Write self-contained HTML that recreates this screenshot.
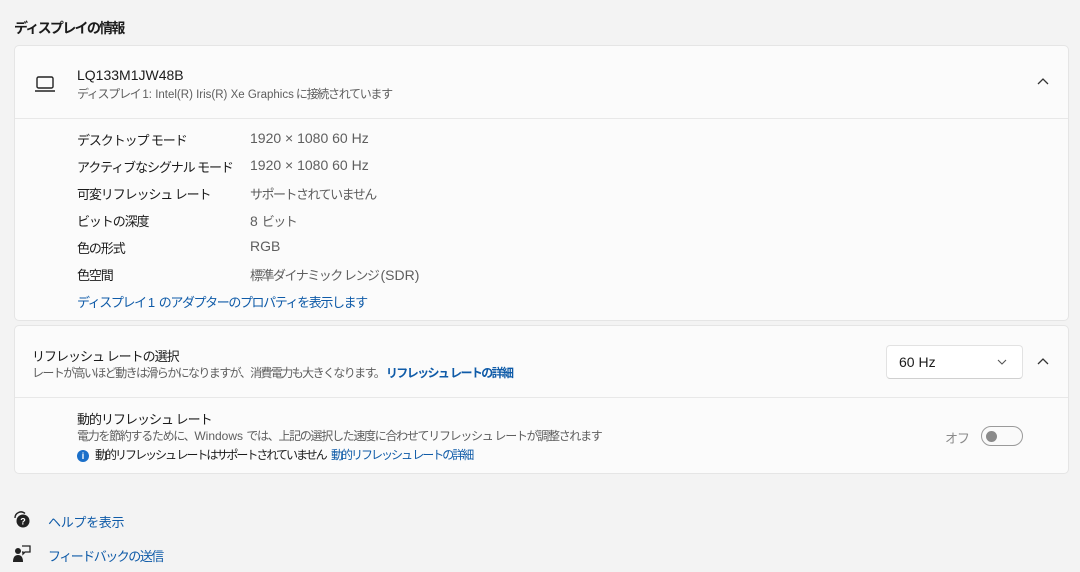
<!DOCTYPE html>
<html><head><meta charset="utf-8"><style>
*{margin:0;padding:0;box-sizing:border-box}
body{width:1080px;height:572px;background:#f3f3f3;font-family:"Liberation Sans","Noto Sans CJK JP",sans-serif;color:#1b1b1b;position:relative;overflow:hidden}
.a{position:absolute;white-space:nowrap}
.card{position:absolute;left:14px;width:1055px;background:#fbfbfb;border:1px solid #e5e5e5;border-radius:5px}
.div{position:absolute;left:0;right:0;height:1px;background:#e8e8e8}
.t14{font-size:14px}.t12{font-size:12px;color:#5e5e5e}
.lbl{font-size:13px;letter-spacing:-1.1px;color:#1b1b1b}.val{font-size:14px;color:#5e5e5e}
.vj{font-size:13px;letter-spacing:-1.5px;color:#5e5e5e}
.L{letter-spacing:0}
.link{color:#0f5ba8}
</style></head><body>
<div class="a" style="left:14px;top:18px;font-size:14px;font-weight:600;letter-spacing:-1.7px">ディスプレイの情報</div>

<div class="card" style="top:45px;height:276px">
 <svg class="a" style="left:19px;top:29px" width="22" height="18" viewBox="0 0 22 18"><rect x="3" y="2" width="16" height="11" rx="1.5" fill="none" stroke="#222" stroke-width="1.4"/><line x1="1" y1="16" x2="21" y2="16" stroke="#222" stroke-width="1.4"/></svg>
 <div class="a t14" style="left:62px;top:21px">LQ133M1JW48B</div>
 <div class="a t12" style="left:62px;top:39px;letter-spacing:-1.3px">ディスプレイ <span class="L" style="font-size:11.5px">1: Intel(R) Iris(R) Xe Graphics</span> に接続されています</div>
 <svg class="a" style="left:1022px;top:31px" width="12" height="8" viewBox="0 0 12 8"><path d="M1 7 L6 2 L11 7" fill="none" stroke="#333" stroke-width="1.3"/></svg>
 <div class="div" style="top:72px"></div>
 <div class="a lbl" style="left:62px;top:84px">デスクトップ モード</div><div class="a val" style="left:235px;top:84px">1920 × 1080 60 Hz</div>
 <div class="a lbl" style="left:62px;top:111px">アクティブなシグナル モード</div><div class="a val" style="left:235px;top:111px">1920 × 1080 60 Hz</div>
 <div class="a lbl" style="left:62px;top:138px">可変リフレッシュ レート</div><div class="a vj" style="left:235px;top:138px">サポートされていません</div>
 <div class="a lbl" style="left:62px;top:165px">ビットの深度</div><div class="a vj" style="left:235px;top:165px"><span class="L" style="font-size:14px">8 </span>ビット</div>
 <div class="a lbl" style="left:62px;top:192px">色の形式</div><div class="a val" style="left:235px;top:192px">RGB</div>
 <div class="a lbl" style="left:62px;top:219px">色空間</div><div class="a vj" style="left:235px;top:219px">標準ダイナミック レンジ <span class="L" style="font-size:14px">(SDR)</span></div>
 <div class="a link" style="left:62px;top:246px;font-size:13px;letter-spacing:-1.4px">ディスプレイ <span class="L">1 </span>のアダプターのプロパティを表示します</div>
</div>

<div class="card" style="top:325px;height:149px">
 <div class="a" style="left:17px;top:20px;font-size:13px;letter-spacing:-1px">リフレッシュ レートの選択</div>
 <div class="a t12" style="left:17px;top:38px;letter-spacing:-1.6px">レートが高いほど動きは滑らかになりますが、消費電力も大きくなります。 <b class="link" style="font-weight:600">リフレッシュ レートの詳細</b></div>
 <div class="a" style="left:871px;top:19px;width:137px;height:34px;background:#fff;border:1px solid #e2e2e2;border-bottom-color:#d0d0d0;border-radius:4px">
  <div class="a t14" style="left:12px;top:8px">60 Hz</div>
  <svg class="a" style="left:110px;top:13px" width="10" height="6" viewBox="0 0 10 6"><path d="M1 1 L5 5 L9 1" fill="none" stroke="#555" stroke-width="1.1"/></svg>
 </div>
 <svg class="a" style="left:1022px;top:31px" width="12" height="8" viewBox="0 0 12 8"><path d="M1 7 L6 2 L11 7" fill="none" stroke="#333" stroke-width="1.3"/></svg>
 <div class="div" style="top:71px"></div>
 <div class="a" style="left:62px;top:83px;font-size:13px;letter-spacing:-1px">動的リフレッシュ レート</div>
 <div class="a t12" style="left:62px;top:101px;letter-spacing:-1.3px">電力を節約するために、<span class="L">Windows </span>では、上記の選択した速度に合わせてリフレッシュ レートが調整されます</div>
 <div class="a" style="left:62px;top:124px;width:12px;height:12px;border-radius:50%;background:#1a6fc9;color:#fff;font-size:9px;font-weight:bold;text-align:center;line-height:12px">i</div>
 <div class="a" style="left:80px;top:120px;font-size:12px;color:#1b1b1b;letter-spacing:-2px">動的リフレッシュ レートはサポートされていません <span class="link" style="margin-left:4px">動的リフレッシュ レートの詳細</span></div>
 <div class="a" style="left:930px;top:102px;font-size:13px;color:#8a8a8a;letter-spacing:-1px">オフ</div>
 <div class="a" style="left:966px;top:100px;width:42px;height:20px;border:1px solid #9a9a9a;border-radius:10px;background:#fafafa"><div class="a" style="left:4px;top:4px;width:11px;height:11px;border-radius:50%;background:#8a8a8a"></div></div>
</div>

<svg class="a" style="left:13px;top:511px" width="18" height="18" viewBox="0 0 18 18"><circle cx="10" cy="10" r="6.5" fill="#222"/><path d="M2 7 A6 6 0 0 1 12 2.5" fill="none" stroke="#222" stroke-width="1.4"/><text x="10" y="13.5" font-size="9" fill="#fff" text-anchor="middle" font-family="Liberation Sans" font-weight="bold">?</text></svg>
<div class="a link" style="left:48px;top:512px;font-size:13px;letter-spacing:-0.3px">ヘルプを表示</div>
<svg class="a" style="left:13px;top:545px" width="18" height="18" viewBox="0 0 18 18"><circle cx="5" cy="6" r="3" fill="#222"/><path d="M0 17 Q0 10 5 10 Q10 10 10 17Z" fill="#222"/><path d="M9 1 H17 V7 H12 L10 9 V7 H9" fill="none" stroke="#222" stroke-width="1.3"/></svg>
<div class="a link" style="left:48px;top:546px;font-size:13px;letter-spacing:-1.5px">フィードバックの送信</div>
</body></html>
